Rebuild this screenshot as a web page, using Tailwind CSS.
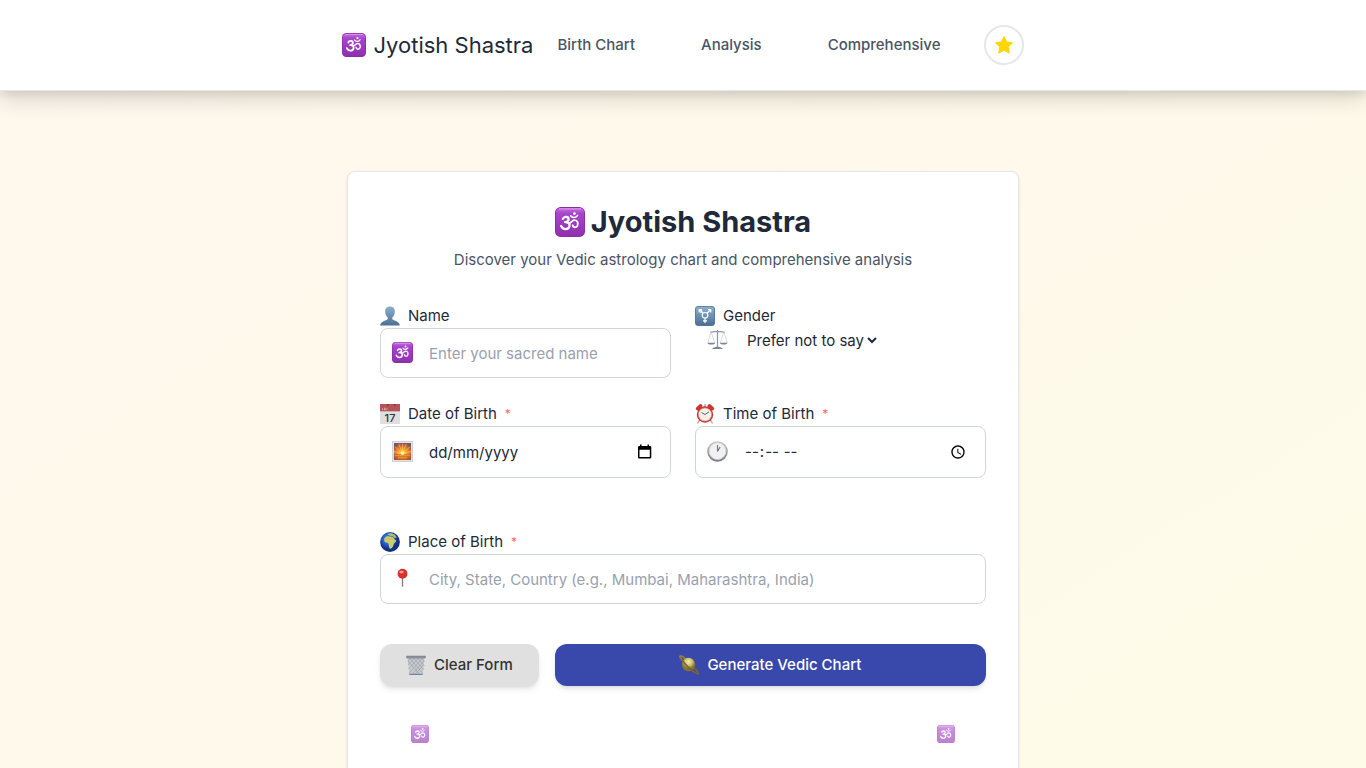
<!DOCTYPE html>
<html lang="en">
<head>
<meta charset="utf-8">
<meta name="viewport" content="width=device-width, initial-scale=1">
<title>Jyotish Shastra</title>
<script src="https://cdn.jsdelivr.net/npm/@tailwindcss/browser@4"></script>
</head>
<body class="min-h-screen bg-linear-to-br from-orange-50 to-yellow-50 pb-20 font-['Inter',sans-serif] text-[15px] leading-6 text-gray-800">

<svg class="absolute size-0" aria-hidden="true">
  <defs>
    <linearGradient id="purple" x2="0" y2="1"><stop offset="0" stop-color="#c76ee0"/><stop offset=".2" stop-color="#a944cd"/><stop offset="1" stop-color="#8f2fae"/></linearGradient>
    <linearGradient id="steel" x2="0" y2="1"><stop offset="0" stop-color="#8cb0cc"/><stop offset="1" stop-color="#4b6f94"/></linearGradient>
    <radialGradient id="ocean" cx=".4" cy=".35"><stop offset="0" stop-color="#5a9be6"/><stop offset=".6" stop-color="#2459c4"/><stop offset="1" stop-color="#123083"/></radialGradient>
    <radialGradient id="sun" cx=".5" cy=".65" r=".65"><stop offset="0" stop-color="#fff27a"/><stop offset=".3" stop-color="#ffb02e"/><stop offset=".7" stop-color="#d9702f"/><stop offset="1" stop-color="#7d5260"/></radialGradient>
    <linearGradient id="silver" x2="0" y2="1"><stop offset="0" stop-color="#c4c6ca"/><stop offset="1" stop-color="#77797e"/></linearGradient>
    <radialGradient id="saturn" cx=".5" cy=".3"><stop offset="0" stop-color="#f5efb4"/><stop offset=".6" stop-color="#c9bb69"/><stop offset="1" stop-color="#83732f"/></radialGradient>
    <symbol id="om" viewBox="0 0 24 24">
      <rect width="24" height="24" rx="4.5" fill="#8a2ba6"/>
      <rect x=".7" y=".7" width="22.6" height="22.6" rx="4" fill="url(#purple)"/>
      <path d="M3.500 1.500h17" stroke="#dc9aec" stroke-width=".8" stroke-linecap="round"/>
      <g fill="none" stroke="#fff" stroke-linecap="round" stroke-linejoin="round">
        <path stroke-width="1.800" d="M6.300 9.500C7.400 7.200 11 7.600 10.900 10c-.1 1.500-1.500 2-2.800 2.100 2.300-.1 3.900 1.100 3.500 3.100-.6 3.100-5.200 3.500-6.700 0"/>
        <path stroke-width="1.500" d="M11.300 12.700c1.800.3 2.200-2.100 4.200-2.200 2.600-.1 3.400 2.800 2.300 4.700-1 1.500-3.200 1.400-3.700-.6"/>
        <path stroke-width="1.300" d="M12.500 7c1.200 1.900 4.400 1.900 5.600-.3"/>
      </g>
      <circle cx="15.500" cy="5.200" r="1.100" fill="#fff"/>
    </symbol>
    <symbol id="person" viewBox="0 0 20 20"><path fill="url(#steel)" d="M10 .5c3.300 0 5 2.200 4.800 5.200-.1 2.700-1.300 4.800-2.500 5.800v1.600c.3 1.400 7.100 1.800 7.500 6.400H.2c.4-4.600 7.200-5 7.500-6.400v-1.600c-1.200-1-2.400-3.100-2.500-5.800C5 2.700 6.700.5 10 .5z"/></symbol>
    <symbol id="gender" viewBox="0 0 20 20">
      <rect width="20" height="20" rx="3.500" fill="#54779a"/><rect x=".8" y=".8" width="18.400" height="18.400" rx="3" fill="url(#steel)"/>
      <g fill="none" stroke="#fff" stroke-width="1.200"><circle cx="10" cy="9.300" r="2.800"/><path d="M10 12v5M8 14.800h4M12 7.200l3.500-3.400M13 3.700h2.700v2.800M8 7.200L4.500 3.800M4.200 6.500V3.700H7M5.300 6.500l2-1.800"/></g>
    </symbol>
    <symbol id="scales" viewBox="0 0 22 22">
      <g fill="none" stroke="#8e9aa3" stroke-width=".9"><path stroke-width="1.300" d="M11 1v18M3.500 3.200c3 .6 5-1 7.500-.8 2.500-.2 4.500 1.400 7.500.8"/><path stroke="#b5bec5" stroke-width=".6" d="M4 3.400L1 14.500M4.500 3.400L8 14.500M17.500 3.400L14 14.500M18 3.400l3 11.100"/></g>
      <path fill="#7b8892" d="M.4 14.300h8.300c-.6 2.600-7.600 2.600-8.300 0zM13.300 14.300h8.300c-.6 2.600-7.600 2.600-8.300 0zM5.500 21c0-1.800 2-1.500 4.500-2.500h2c2.500 1 4.500.7 4.500 2.500z"/>
    </symbol>
    <symbol id="calendar" viewBox="0 0 20 20">
      <path fill="#dfdfdf" d="M0 0h20v20H0z"/><path fill="#b65358" d="M0 0h20v7.300H0z"/><path fill="#d9a0a2" d="M2 4.200h1v2H2zM4 3.800h1.500v2.400H4zM6.300 4.200h1v2h-1z"/><path fill="#8d3238" d="M7 0h1.500v2H7zM14 0h1.500v2H14z"/>
      <text x="10" y="17.500" text-anchor="middle" font-family="Inter" font-size="11" font-weight="500" fill="#333">17</text>
    </symbol>
    <symbol id="sunrise" viewBox="0 0 22 22">
      <path fill="#c8d3d8" d="M0 0h22v22H0z"/><path fill="#edf2f3" d="M1 1h20v20H1z"/><path fill="url(#sun)" d="M2 2h18v18H2z"/>
      <path stroke="#ffd750" stroke-width=".6" d="M11 13L3 6M11 13L7 3M11 13V3M11 13l4-10M11 13l8-7M11 13L2 11M11 13l9-2"/><path fill="#a44d2b" fill-opacity=".65" d="M2 14h18v6H2z"/><path fill="#ff9d2a" d="M3 15h16v1H3zM6 17h10v1H6z"/><circle cx="11" cy="12.700" r="1.900" fill="#fff7a0"/>
    </symbol>
    <symbol id="alarm" viewBox="0 0 20 20">
      <path stroke="#b9a7a4" stroke-width="1.500" d="M4.500 16L2.500 19.500M15.500 16l2 3.500"/><path stroke="#c8372f" stroke-width="3.500" stroke-linecap="round" d="M2.600 4.600l3-2.700M17.400 4.600l-3-2.700"/><path stroke="#888" d="M10 0v3"/>
      <circle cx="10" cy="10.500" r="8.200" fill="#c9352e"/><circle cx="10" cy="10.500" r="6.600" fill="#f1efea" stroke="#e38a80" stroke-width=".6"/><path fill="none" stroke="#555" stroke-width=".9" d="M6.500 8.500l3.500 2 4-2.600"/>
    </symbol>
    <symbol id="clock" viewBox="0 0 22 22">
      <circle cx="11" cy="11" r="10.800" fill="url(#silver)"/><circle cx="11" cy="10.600" r="8.800" fill="#f0f1f3" stroke="#d5d6d8"/><path fill="none" stroke="#777" stroke-width="1.200" d="M11 11V4.300M11 11l2.700-4.700"/>
    </symbol>
    <symbol id="globe" viewBox="0 0 20 20">
      <circle cx="10" cy="10" r="9.900" fill="url(#ocean)"/><path fill="#c6d06a" d="M5 5.500c2-2 3.600-1.300 5.200-1 1.700.2 3 .5 3.700 1.800.5 1.200 1.400 2 2.400 2.400-.3 1.500-2.300 2-2.600 3.400-.3 2.200-1.300 4.200-3 4.700-1.700-.1-1.600-2.200-2-3.800C8.600 11.400 8 10.700 6.500 10.600 4.600 10.600 3.300 8 5 5.500z"/><path fill="#a9c26a" d="M7.500 2c2-1.200 5.500-.8 7.500.9l1.800 2.600-2.200.4-2-1.700-2-.2L9 3.200z"/><path fill="#dfb863" d="M6 6.500c2-1 4-1 6 .2l-.5 1.300H6z"/>
    </symbol>
    <symbol id="pin" viewBox="0 0 22 22"><path stroke="#8b7773" stroke-width="1.400" d="M11 9v10.500"/><circle cx="11" cy="6" r="5.200" fill="#d8322d"/><ellipse cx="10" cy="4.300" rx="2.300" ry="1.500" fill="#f49a90"/></symbol>
    <symbol id="bin" viewBox="0 0 20 20">
      <path fill="#c7cbd0" d="M1.400 2h17.200l-1.800 17.500H3.200z"/><g fill="none" stroke="#8b9096" stroke-width=".5"><path d="M2 6l12 13.500M3.500 3l13.300 15M7.500 3L18 15M11.500 3l7 8M15.500 3l3 3.500M18 6L6 19.500M16.500 3L3.200 18M12.500 3L2.500 14M8.500 3L2 10M4.500 3L2 6M17.500 10L9 19.500"/></g><path fill="#e6e8ea" stroke="#5d656d" stroke-width=".9" d="M.8 1.300h18.400v1.500H.8z"/><path stroke="#5d7388" d="M3.200 19.300h13.600"/>
    </symbol>
    <symbol id="planet" viewBox="0 0 20 20">
      <path fill="none" stroke="#8d7c4a" stroke-width="1.800" d="M5 7C1 3 .3 1.400 1.200 1 2 .6 4 1.800 6.500 4"/><circle cx="9.500" cy="9.500" r="6.700" fill="url(#saturn)"/><path fill="none" stroke="#786335" stroke-width="1.700" d="M3 4.500C5 9 14.500 17.500 18.500 18.800c1.400-.1.400-2.300-3.300-6.200"/>
    </symbol>
  </defs>
</svg>

<header class="relative border-b border-gray-200 bg-white shadow-[0_10px_20px_rgba(0,0,0,0.12),0_4px_8px_rgba(0,0,0,0.08)]">
  <nav class="flex h-[90px] items-center justify-center">
    <a href="#" class="flex items-center gap-2 text-[22px]"><svg class="size-6"><use href="#om"/></svg>Jyotish Shastra</a>
    <div class="mr-5 flex gap-[18px] font-medium text-gray-600">
      <a href="#birth" class="px-6">Birth Chart</a>
      <a href="#analysis" class="px-6">Analysis</a>
      <a href="#comprehensive" class="px-6">Comprehensive</a>
    </div>
    <button type="button" aria-label="Toggle theme" class="flex size-10 items-center justify-center rounded-full border-2 border-gray-200 bg-white">
      <svg class="size-5" viewBox="0 0 20 20"><path fill="#ffd600" stroke="#ffd600" stroke-linejoin="round" d="M10 1.500l2.600 5.500 6 .8-4.400 4.200 1.100 6-5.300-2.900L4.700 18l1.100-6L1.400 7.800l6-.8z"/></svg>
    </button>
  </nav>
</header>

<main class="mx-auto mt-20 max-w-2xl rounded-lg border border-gray-200 bg-white p-8 pb-20 shadow-sm">
  <h1 class="flex h-9 items-center justify-center gap-1.5 text-[29px] font-bold"><svg class="size-[30px]"><use href="#om"/></svg>Jyotish Shastra</h1>
  <p class="mt-2 text-center text-gray-600">Discover your Vedic astrology chart and comprehensive analysis</p>

  <form class="mt-8">
    <div class="grid grid-cols-2 gap-6">
      <div>
        <label for="name" class="flex items-center gap-2"><svg class="size-5"><use href="#person"/></svg>Name</label>
        <div class="relative">
          <svg class="absolute top-3.5 left-3 size-[21px]"><use href="#om"/></svg>
          <input id="name" type="text" placeholder="Enter your sacred name" class="block h-[50px] w-full rounded-lg border border-gray-300 pr-4 pl-12 placeholder:text-gray-400">
        </div>
      </div>
      <div>
        <label for="gender" class="flex items-center gap-2"><svg class="size-5"><use href="#gender"/></svg>Gender</label>
        <div class="relative flex">
          <svg class="absolute top-[1px] left-3 size-[21px]"><use href="#scales"/></svg>
          <select id="gender" class="ml-12 h-6 bg-white"><option>Prefer not to say</option><option>Male</option><option>Female</option></select>
        </div>
      </div>
      <div>
        <label for="date" class="flex items-center gap-2"><svg class="size-5"><use href="#calendar"/></svg>Date of Birth <span class="text-xs text-red-400">*</span></label>
        <div class="relative">
          <svg class="absolute top-[15px] left-3 size-[21px]"><use href="#sunrise"/></svg>
          <input id="date" type="text" placeholder="dd/mm/yyyy" class="block h-[52px] w-full rounded-lg border border-gray-300 pr-12 pl-12 placeholder:text-gray-800">
          <button type="button" aria-label="Open calendar" class="absolute top-4 right-4 flex size-5 items-center justify-center"><svg class="size-4" viewBox="0 0 16 16"><path fill="#000" fill-rule="evenodd" d="M3 .5h1.500V2h6V.5H12V2h1q1.300 0 1.300 1.300v10q0 1.300-1.300 1.300H2.300Q1 14.600 1 13.300v-10Q1 2 2.300 2H3zM2.500 5.700v7.400h10.300V5.700z"/></svg></button>
        </div>
      </div>
      <div>
        <label for="time" class="flex items-center gap-2"><svg class="size-5"><use href="#alarm"/></svg>Time of Birth <span class="text-xs text-red-400">*</span></label>
        <div class="relative">
          <svg class="absolute top-[15px] left-3 size-[21px]"><use href="#clock"/></svg>
          <input id="time" type="time" class="block h-[52px] w-full rounded-lg border border-gray-300 pr-4 pl-12">
        </div>
      </div>
    </div>

    <div class="mt-13">
      <label for="place" class="flex items-center gap-2"><svg class="size-5"><use href="#globe"/></svg>Place of Birth <span class="text-xs text-red-400">*</span></label>
      <div class="relative">
        <svg class="absolute top-3.5 left-3 size-[21px]"><use href="#pin"/></svg>
        <input id="place" type="text" placeholder="City, State, Country (e.g., Mumbai, Maharashtra, India)" class="block h-[50px] w-full rounded-lg border border-gray-300 pr-4 pl-12 placeholder:text-gray-400">
      </div>
    </div>

    <div class="mt-10 flex gap-4 font-medium">
      <button type="reset" class="flex h-[42px] items-center gap-2 rounded-xl bg-[#e0e0e0] px-[26px] text-[#333] shadow-md"><svg class="size-5"><use href="#bin"/></svg>Clear Form</button>
      <button type="submit" class="flex h-[42px] flex-1 items-center justify-center gap-2 rounded-xl bg-[#3949ab] text-white shadow-md"><svg class="size-5"><use href="#planet"/></svg>Generate Vedic Chart</button>
    </div>
  </form>

  <div class="mt-[39px] flex justify-between px-[31px] opacity-60"><svg class="size-[18px]"><use href="#om"/></svg><svg class="size-[18px]"><use href="#om"/></svg></div>
</main>
</body>
</html>
